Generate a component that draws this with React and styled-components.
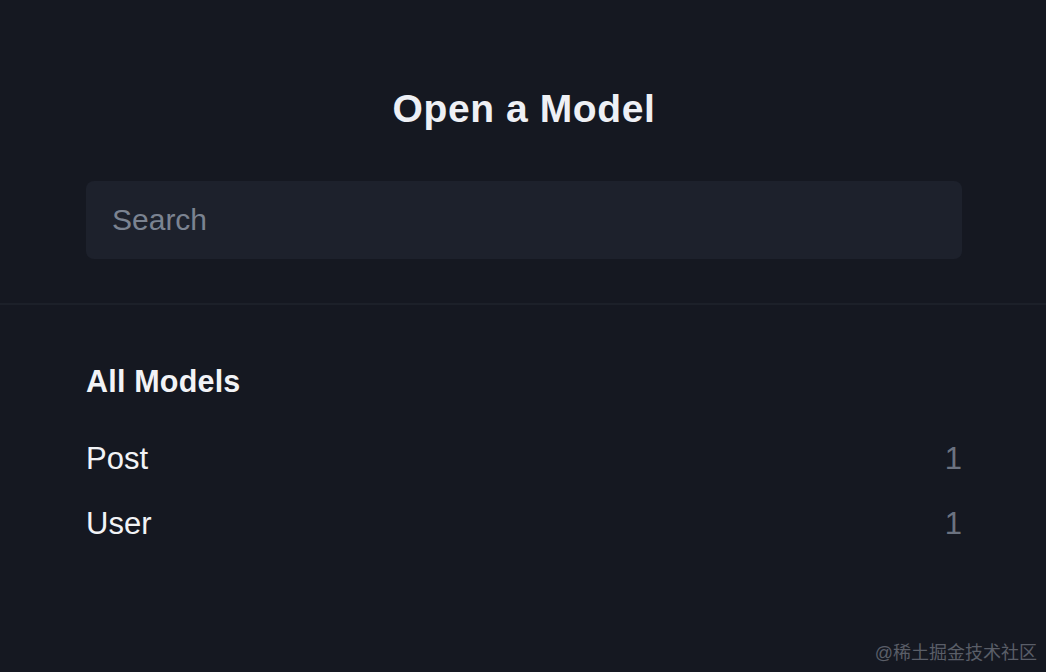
import React, { useState } from "react";
import styled, { createGlobalStyle } from "styled-components";

const GlobalStyle = createGlobalStyle`
  html, body {
    margin: 0;
    padding: 0;
    background: #151821;
  }
  body {
    font-family: "Liberation Sans", Arial, "Noto Sans CJK SC", sans-serif;
  }
`;

const Page = styled.div`
  position: relative;
  width: 1046px;
  height: 672px;
  overflow: hidden;
  background: #151821;
`;

const Header = styled.div`
  padding: 87px 84px 44px 86px;
  border-bottom: 2px solid #1c2029;
`;

const Title = styled.h1`
  margin: 0 0 50px;
  text-align: center;
  font-size: 39px;
  line-height: 44px;
  font-weight: 700;
  letter-spacing: 0.6px;
  color: #eef0f5;
`;

const SearchInput = styled.input`
  display: block;
  box-sizing: border-box;
  width: 100%;
  height: 78px;
  padding: 0 26px;
  border: none;
  border-radius: 8px;
  outline: none;
  background: #1d212c;
  color: #e5e7eb;
  font-family: inherit;
  font-size: 30px;

  &::placeholder {
    color: #7b8391;
  }
`;

const List = styled.div`
  padding: 58px 84px 0 86px;
`;

const SectionTitle = styled.h2`
  margin: 0 0 42px;
  font-size: 30.5px;
  line-height: 36px;
  font-weight: 700;
  letter-spacing: 0.2px;
  color: #f2f3f6;
`;

const Row = styled.div`
  display: flex;
  justify-content: space-between;
  align-items: flex-start;
  height: 65px;
  font-size: 31px;
  line-height: 36px;
  color: #f2f3f6;
`;

const Count = styled.span`
  color: #6b7280;
`;

const Watermark = styled.div`
  position: absolute;
  right: 9px;
  bottom: 8px;
  font-family: "Liberation Sans", "Noto Sans CJK SC", sans-serif;
  font-size: 18px;
  color: #5a5e68;
`;

const models = [
  { name: "Post", count: 1 },
  { name: "User", count: 1 },
];

const App = () => {
  const [query, setQuery] = useState("");

  const shown = models.filter((m) =>
    m.name.toLowerCase().includes(query.toLowerCase())
  );

  return (
    <>
      <GlobalStyle />
      <Page>
        <Header>
          <Title>Open a Model</Title>
          <SearchInput
            placeholder="Search"
            value={query}
            onChange={(e) => setQuery(e.target.value)}
          />
        </Header>
        <List>
          <SectionTitle>All Models</SectionTitle>
          {shown.map((m) => (
            <Row key={m.name}>
              <span>{m.name}</span>
              <Count>{m.count}</Count>
            </Row>
          ))}
        </List>
        <Watermark>@稀土掘金技术社区</Watermark>
      </Page>
    </>
  );
};

export default App;
